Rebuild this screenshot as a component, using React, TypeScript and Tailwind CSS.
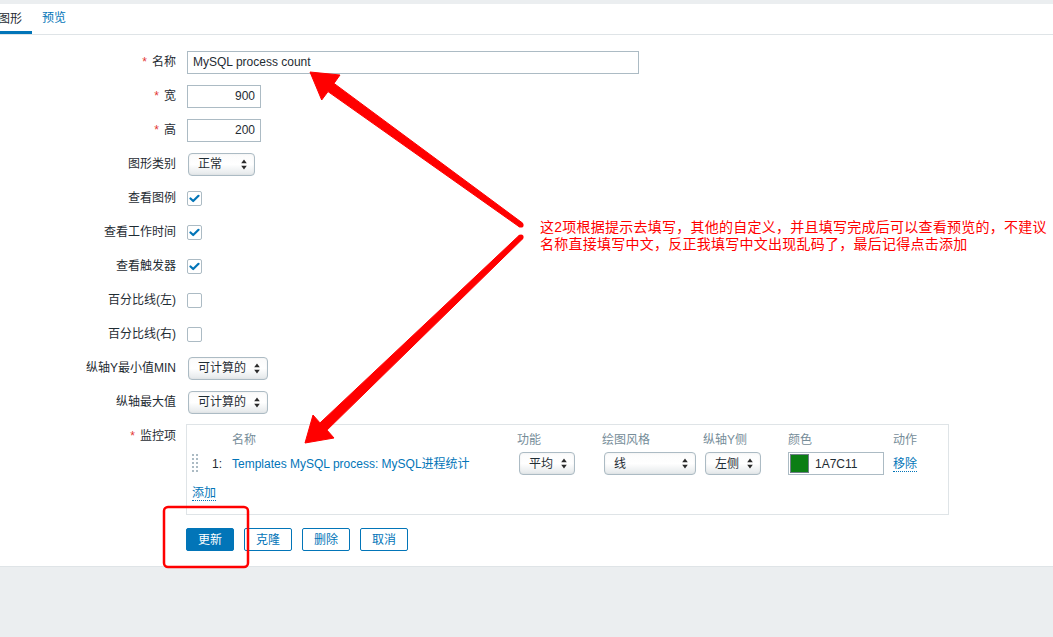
import React from 'react';

const FONT = { fontFamily: '"Liberation Sans", "Noto Sans CJK SC", sans-serif' };

const Arrows: React.FC = () => (
  <svg className="absolute left-0 top-0 pointer-events-none" width="1053" height="637" viewBox="0 0 1053 637">
    {/* upper arrow */}
    <polygon
      points="519.5,227 328,91.6 321.7,100 310,72 340,75 334,83.4 522.5,223"
      fill="#ff0000"
      stroke="#ff0000"
      strokeWidth="1"
      strokeLinejoin="round"
    />
    <circle cx="521" cy="225" r="2.6" fill="#ff0000" />
    {/* lower arrow */}
    <polygon
      points="519.3,235.2 320,422.9 313,415 305,443 334,438 327,430.1 522.7,238.8"
      fill="#ff0000"
      stroke="#ff0000"
      strokeWidth="1"
      strokeLinejoin="round"
    />
    <circle cx="521" cy="237" r="2.6" fill="#ff0000" />
    {/* highlight box around the update button */}
    <rect x="164" y="507" width="84" height="60" rx="4" fill="none" stroke="#ff0000" strokeWidth="2.5" />
  </svg>
);

const SelectBox = ({ value, className }: { value: string; className: string }) => (
  <div
    className={`flex items-center justify-between h-[23px] rounded-[4px] border border-[#acbbc4] bg-linear-to-b from-[#fbfbfb] via-white to-[#e4e8ea] shadow-[inset_0_0_2px_rgba(0,0,0,0.08)] pl-[9px] pr-[7px] text-[12px] text-[#1f2c33] ${className}`}
  >
    <span>{value}</span>
    <svg width="6" height="11" viewBox="0 0 6 11">
      <path d="M3 0.5 L5.8 4.3 H0.2 Z M0.2 6.7 H5.8 L3 10.5 Z" fill="#2b2b2b" />
    </svg>
  </div>
);

const CheckBox = ({ checked }: { checked?: boolean }) => (
  <div className="w-[15px] h-[15px] border border-[#acbbc4] rounded-[2px] bg-white flex items-center justify-center">
    {checked && (
      <svg width="11" height="9" viewBox="0 0 11 9">
        <path d="M1.5 4.5 L4.2 7 L9.5 1.8" stroke="#0275b8" strokeWidth="2.2" fill="none" strokeLinecap="round" strokeLinejoin="round" />
      </svg>
    )}
  </div>
);

const Row = ({ label, required, children }: { label: string; required?: boolean; children: React.ReactNode }) => (
  <div className="flex items-center h-[34px]">
    <div className="w-[176px] shrink-0 text-right text-[12px] text-[#1f2c33]">
      {required && <span className="text-[#e33734] mr-[5px]">*</span>}
      {label}
    </div>
    <div className="ml-[11px] flex items-center">{children}</div>
  </div>
);

const DragHandle = () => (
  <svg width="6" height="20" viewBox="0 0 6 20">
    {[0, 4, 8, 12, 16].map((y) => (
      <g key={y}>
        <rect x="0" y={y} width="2" height="2" fill="#acbbc4" />
        <rect x="4" y={y} width="2" height="2" fill="#acbbc4" />
      </g>
    ))}
  </svg>
);

export default function App() {
  return (
    <div className="relative min-h-screen flex flex-col bg-white text-[#1f2c33] overflow-hidden" style={FONT}>
      <div className="h-[4px] bg-[#ebeef0]" />
      <div className="flex h-[31px] border-b border-[#dfe4e7] text-[12px]">
        <div className="w-[32px] shrink-0 flex items-center justify-end pr-[10px] border-b-[3px] border-[#0275b8] pt-[3px] text-[#1f2c33] whitespace-nowrap">
          <span className="shrink-0">图形</span>
        </div>
        <div className="flex items-center px-[10px] pb-[3px] text-[#0275b8] whitespace-nowrap">预览</div>
      </div>

      <div className="pt-[10px] pb-[15px]">
        <Row label="名称" required>
          <div className="w-[452px] h-[23px] border border-[#acbbc4] flex items-center px-[5px] text-[12px]">MySQL process count</div>
        </Row>
        <Row label="宽" required>
          <div className="w-[74px] h-[23px] border border-[#acbbc4] flex items-center justify-end px-[5px] text-[12px]">900</div>
        </Row>
        <Row label="高" required>
          <div className="w-[74px] h-[23px] border border-[#acbbc4] flex items-center justify-end px-[5px] text-[12px]">200</div>
        </Row>
        <Row label="图形类别">
          <SelectBox value="正常" className="w-[67px] ml-[1px]" />
        </Row>
        <Row label="查看图例">
          <CheckBox checked />
        </Row>
        <Row label="查看工作时间">
          <CheckBox checked />
        </Row>
        <Row label="查看触发器">
          <CheckBox checked />
        </Row>
        <Row label="百分比线(左)">
          <CheckBox />
        </Row>
        <Row label="百分比线(右)">
          <CheckBox />
        </Row>
        <Row label="纵轴Y最小值MIN">
          <SelectBox value="可计算的" className="w-[80px] ml-[1px]" />
        </Row>
        <Row label="纵轴最大值">
          <SelectBox value="可计算的" className="w-[80px] ml-[1px]" />
        </Row>

        <div className="flex mt-[5px]">
          <div className="w-[176px] shrink-0 text-right text-[12px] pt-[5px] leading-[14px]">
            <span className="text-[#e33734] mr-[5px]">*</span>监控项
          </div>
          <div className="ml-[10px] w-[763px] h-[91px] border border-[#dfe4e7] px-[5px] pt-[6px] text-[12px]">
            <div className="grid grid-cols-[20px_20px_285px_85px_101px_85px_105px_1fr] h-[14px] items-center text-[#768d99]">
              <div />
              <div />
              <div>名称</div>
              <div>功能</div>
              <div>绘图风格</div>
              <div>纵轴Y侧</div>
              <div>颜色</div>
              <div>动作</div>
            </div>
            <div className="grid grid-cols-[20px_20px_285px_85px_101px_85px_105px_1fr] items-center mt-[7px] h-[23px]">
              <div className="flex items-center">
                <DragHandle />
              </div>
              <div>1:</div>
              <div className="text-[#0275b8]">Templates MySQL process: MySQL进程统计</div>
              <div>
                <SelectBox value="平均" className="w-[56px] ml-[2px]" />
              </div>
              <div>
                <SelectBox value="线" className="w-[92px] ml-[2px]" />
              </div>
              <div>
                <SelectBox value="左侧" className="w-[56px] ml-[2px]" />
              </div>
              <div className="flex items-center w-[96px] h-[23px] border border-[#acbbc4] pl-[1px]">
                <div className="w-[19px] h-[19px] bg-[#0b7e14] border border-[#6f7f88]" />
                <span className="ml-[6px]">1A7C11</span>
              </div>
              <div>
                <span className="text-[#0275b8] border-b border-dotted border-[#0275b8]">移除</span>
              </div>
            </div>
            <div className="mt-[12px] h-[14px] flex items-center">
              <span className="text-[#0275b8] border-b border-dotted border-[#0275b8] leading-[13px]">添加</span>
            </div>
          </div>
        </div>

        <div className="flex gap-[10px] ml-[186px] mt-[13px] text-[12px]">
          <button className="w-[48px] h-[23px] rounded-[2px] bg-[#0275b8] border border-[#0275b8] text-white">更新</button>
          <button className="w-[48px] h-[23px] rounded-[2px] bg-white border border-[#0275b8] text-[#0275b8]">克隆</button>
          <button className="w-[48px] h-[23px] rounded-[2px] bg-white border border-[#0275b8] text-[#0275b8]">删除</button>
          <button className="w-[48px] h-[23px] rounded-[2px] bg-white border border-[#0275b8] text-[#0275b8]">取消</button>
        </div>
      </div>

      <div className="flex-1 bg-[#ebeef0] border-t border-[#dfe4e7]" />

      <Arrows />
      <div className="absolute left-[540px] top-[219px] text-[14px] leading-[17px] text-[#ff0000] tracking-[0.25px] whitespace-nowrap">
        <div>这2项根据提示去填写，其他的自定义，并且填写完成后可以查看预览的，不建议</div>
        <div>名称直接填写中文，反正我填写中文出现乱码了，最后记得点击添加</div>
      </div>
    </div>
  );
}
